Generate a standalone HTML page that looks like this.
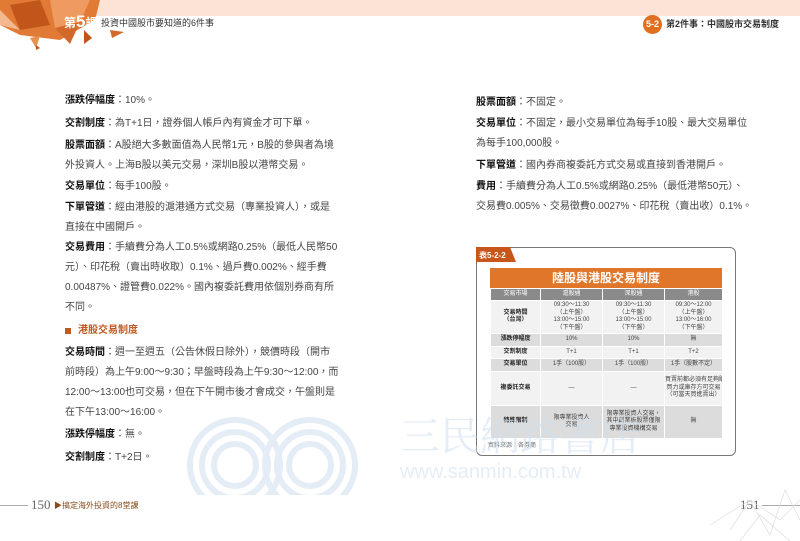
<!DOCTYPE html>
<html><head><meta charset="utf-8"><style>
body{margin:0;width:800px;height:541px;overflow:hidden;background:#fff;position:relative;font-family:"Liberation Sans","Noto Sans CJK TC",sans-serif;color:#333}
.l{position:absolute;font-size:10px;white-space:nowrap;line-height:12px;color:#444}
.l b{color:#111}
.t{position:absolute;border-collapse:collapse;font-size:6px;color:#444;text-align:center;line-height:7.5px;table-layout:fixed}
.t td{border:1px solid #fff;padding:0;white-space:nowrap;overflow:hidden}
</style></head><body>
<div style="position:absolute;left:0;top:0;width:800px;height:16px;background:#fde3d6"></div>
<svg style="position:absolute;left:0;top:0" width="130" height="60">
<polygon points="0,0 100,0 95,20 60,40 20,35 0,25" fill="#e07a35"/>
<polygon points="10,5 40,0 50,25 20,30" fill="#c0561a"/>
<polygon points="50,0 90,0 80,22 55,28" fill="#ee9a60"/>
<polygon points="0,10 20,30 0,25" fill="#f4b890"/>
<polygon points="55,28 80,22 70,44" fill="#d2692a"/>
<polygon points="30,38 40,36 36,48" fill="#e8904f"/>
<polygon points="84,30 92,38 84,44" fill="#c0561a"/>
<polygon points="110,30 124,32 112,38" fill="#d2692a"/>
<polygon points="36,45 40,48 36,50" fill="#c0561a"/>
</svg>
<div style="position:absolute;left:64px;top:12px;font-size:12px;color:#fff;font-weight:bold">第<span style="font-size:17px">5</span>課</div>
<div style="position:absolute;left:101px;top:16px;font-size:9px;color:#333">投資中國股市要知道的6件事</div>
<div style="position:absolute;left:643px;top:15px;width:19px;height:19px;border-radius:50%;background:#e07020;color:#fff;font-size:9px;font-weight:bold;text-align:center;line-height:19px">5-2</div>
<div style="position:absolute;left:666px;top:17px;font-size:9px;color:#333;font-weight:bold">第2件事：中國股市交易制度</div>

<div class="l" style="left:65px;top:95px"><b>漲跌停幅度</b>：10%。</div>
<div class="l" style="left:65px;top:118px"><b>交割制度</b>：為T+1日，證券個人帳戶內有資金才可下單。</div>
<div class="l" style="left:65px;top:140px"><b>股票面額</b>：A股絕大多數面值為人民幣1元，B股的參與者為境</div>
<div class="l" style="left:65px;top:160px">外投資人。上海B股以美元交易，深圳B股以港幣交易。</div>
<div class="l" style="left:65px;top:181px"><b>交易單位</b>：每手100股。</div>
<div class="l" style="left:65px;top:202px"><b>下單管道</b>：經由港股的滬港通方式交易（專業投資人），或是</div>
<div class="l" style="left:65px;top:222px">直接在中國開戶。</div>
<div class="l" style="left:65px;top:242px"><b>交易費用</b>：手續費分為人工0.5%或網路0.25%（最低人民幣50</div>
<div class="l" style="left:65px;top:262px">元）、印花稅（賣出時收取）0.1%、過戶費0.002%、經手費</div>
<div class="l" style="left:65px;top:282px">0.00487%、證管費0.022%。國內複委託費用依個別券商有所</div>
<div class="l" style="left:65px;top:302px">不同。</div>
<div style="position:absolute;left:65px;top:328px;width:6px;height:6px;background:#c05a20"></div>
<div class="l" style="left:78px;top:325px;color:#c05a20;font-weight:bold">港股交易制度</div>
<div class="l" style="left:65px;top:347px"><b>交易時間</b>：週一至週五（公告休假日除外），競價時段（開市</div>
<div class="l" style="left:65px;top:367px">前時段）為上午9:00～9:30；早盤時段為上午9:30～12:00，而</div>
<div class="l" style="left:65px;top:387px">12:00～13:00也可交易，但在下午開市後才會成交，午盤則是</div>
<div class="l" style="left:65px;top:407px">在下午13:00～16:00。</div>
<div class="l" style="left:65px;top:429px"><b>漲跌停幅度</b>：無。</div>
<div class="l" style="left:65px;top:452px"><b>交割制度</b>：T+2日。</div>

<div class="l" style="left:476px;top:97px"><b>股票面額</b>：不固定。</div>
<div class="l" style="left:476px;top:118px"><b>交易單位</b>：不固定，最小交易單位為每手10股、最大交易單位</div>
<div class="l" style="left:476px;top:138px">為每手100,000股。</div>
<div class="l" style="left:476px;top:160px"><b>下單管道</b>：國內券商複委託方式交易或直接到香港開戶。</div>
<div class="l" style="left:476px;top:181px"><b>費用</b>：手續費分為人工0.5%或網路0.25%（最低港幣50元）、</div>
<div class="l" style="left:476px;top:201px">交易費0.005%、交易徵費0.0027%、印花稅（賣出收）0.1%。</div>

<div style="position:absolute;left:476px;top:247px;width:258px;height:207px;border:1px solid #777;border-radius:6px;background:#fff"></div>
<svg style="position:absolute;left:476px;top:247px" width="40" height="16"><polygon points="0,0 34,0 40,15 0,15" fill="#c8551a"/></svg>
<div style="position:absolute;left:479px;top:250px;font-size:8px;color:#fff;font-weight:bold">表5-2-2</div>
<div style="position:absolute;left:490px;top:268px;width:232px;height:20px;background:#e0762a;color:#fff;font-size:12px;font-weight:bold;text-align:center;line-height:20px">陸股與港股交易制度</div>
<table class="t" style="left:490px;top:288px;width:232px">
<colgroup><col style="width:50px"><col style="width:62px"><col style="width:62px"><col style="width:58px"></colgroup>
<tr style="background:#8a8a8a;color:#fff"><td style="height:11px">交易市場</td><td>滬股通</td><td>深股通</td><td>港股</td></tr>
<tr style="background:#f2f2f2"><td style="height:32px;font-weight:bold;color:#222">交易時間<br>（台灣）</td><td>09:30～11:30<br>（上午盤）<br>13:00～15:00<br>（下午盤）</td><td>09:30～11:30<br>（上午盤）<br>13:00～15:00<br>（下午盤）</td><td>09:30～12:00<br>（上午盤）<br>13:00～16:00<br>（下午盤）</td></tr>
<tr style="background:#dcdcdc"><td style="height:12px;font-weight:bold;color:#222">漲跌停幅度</td><td>10%</td><td>10%</td><td>無</td></tr>
<tr style="background:#f2f2f2"><td style="height:11px;font-weight:bold;color:#222">交割制度</td><td>T+1</td><td>T+1</td><td>T+2</td></tr>
<tr style="background:#dcdcdc"><td style="height:12px;font-weight:bold;color:#222">交易單位</td><td>1手（100股）</td><td>1手（100股）</td><td>1手（股數不定）</td></tr>
<tr style="background:#f2f2f2"><td style="height:33px;font-weight:bold;color:#222">複委託交易</td><td>—</td><td>—</td><td>買賣前都必須有足夠購<br>買力或庫存方可交易<br>（可當天買進賣出）</td></tr>
<tr style="background:#dcdcdc"><td style="height:32px;font-weight:bold;color:#222">特殊限制</td><td>限專業投資人<br>交易</td><td>限專業投資人交易，<br>其中創業板股票僅限<br>專業投資機構交易</td><td>無</td></tr>
</table>
<div style="position:absolute;left:488px;top:440px;font-size:6px;color:#666">資料來源：各券商</div>

<div style="position:absolute;left:0;top:0;width:800px;height:541px;opacity:0.55;pointer-events:none">
<svg style="position:absolute;left:180px;top:405px" width="400" height="90">
<g fill="none" stroke="#cfe0f0" stroke-width="6">
<circle cx="55" cy="60" r="45"/><circle cx="55" cy="60" r="33"/><circle cx="55" cy="60" r="21"/>
<circle cx="130" cy="60" r="45"/><circle cx="130" cy="60" r="33"/><circle cx="130" cy="60" r="21"/>
</g></svg>
<div style="position:absolute;left:400px;top:412px;font-size:40px;color:#cfe0f0;font-family:'Noto Serif CJK SC',serif;line-height:44px">三民網路書店</div>
<div style="position:absolute;left:400px;top:461px;font-size:20px;color:#cfe0f0;line-height:22px">www.sanmin.com.tw</div>
</div>

<div style="position:absolute;left:0;top:505px;width:28px;height:1px;background:#aaa"></div>
<div style="position:absolute;left:31px;top:497px;font-size:13px;color:#666;font-family:'Liberation Serif',serif">150</div>
<div style="position:absolute;left:54px;top:500px;font-size:8px;color:#8a4a1a">▶搞定海外投資的8堂課</div>
<div style="position:absolute;left:740px;top:497px;font-size:13px;color:#666;font-family:'Liberation Serif',serif">151</div>
<div style="position:absolute;left:762px;top:505px;width:38px;height:1px;background:#aaa"></div>
<svg style="position:absolute;left:700px;top:480px" width="100" height="61"><g stroke="#ddd" fill="none" stroke-width="0.7"><polyline points="30,50 50,20 70,55 85,10 100,40"/><polyline points="10,45 50,20 80,40 100,20"/><polyline points="40,61 60,35 90,61"/></g></svg>
</body></html>
